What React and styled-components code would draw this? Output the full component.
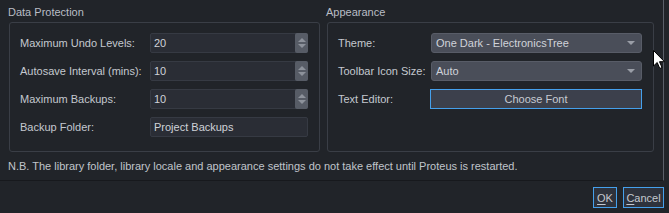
import React from "react";
import styled, { createGlobalStyle } from "styled-components";

const GlobalStyle = createGlobalStyle`
  html, body {
    margin: 0;
    padding: 0;
    background: #212429;
  }
  body {
    font-family: "Liberation Sans", Arial, sans-serif;
    font-size: 11px;
    color: #c4c8cf;
  }
`;

const Dialog = styled.div`
  position: relative;
  width: 669px;
  height: 213px;
  display: flex;
  flex-direction: column;
  overflow: hidden;
`;

const Body = styled.div`
  width: 664px;
  height: 181px;
  box-sizing: border-box;
  border-right: 1px solid #5a5f69;
  border-bottom: 1px solid #17191d;
  padding: 5px 0 0 8px;
  display: flex;
  flex-direction: column;
`;

const Columns = styled.div`
  display: flex;
  gap: 6px;
`;

const Group = styled.section`
  display: flex;
  flex-direction: column;
  width: ${(p) => p.$w}px;
`;

const GroupTitle = styled.div`
  height: 17px;
  line-height: 14px;
  color: #b9bdc5;
`;

const GroupBox = styled.div`
  margin-left: 1px;
  height: 130px;
  box-sizing: border-box;
  border: 1px solid #3a3e46;
  border-radius: 3px;
  padding: 10px 11px 0 10px;
  display: flex;
  flex-direction: column;
  gap: 8px;
`;

const Row = styled.div`
  display: grid;
  grid-template-columns: ${(p) => p.$label}px 1fr;
  align-items: center;
  height: 20px;
`;

const Label = styled.span`
  color: #c4c8cf;
  white-space: nowrap;
`;

const Field = styled.div`
  position: relative;
  height: 20px;
  box-sizing: border-box;
  border: 1px solid #363a43;
  border-radius: 2px;
  background: #2a2d35;
  display: flex;
  align-items: center;
  padding-left: 3px;
  color: #cfd2d8;
`;

const Spinner = styled.div`
  position: absolute;
  right: -1px;
  top: -1px;
  bottom: -1px;
  width: 13px;
  border-radius: 2px;
  background: #575c66;
  display: flex;
  flex-direction: column;
  align-items: center;
  justify-content: center;
  gap: 2px;
`;

const Arrow = styled.span`
  width: 0;
  height: 0;
  border-left: 4px solid transparent;
  border-right: 4px solid transparent;
  ${(p) =>
    p.$up
      ? `border-bottom: 4px solid ${p.$c || "#8d929b"};`
      : `border-top: 4px solid ${p.$c || "#8d929b"};`}
`;

const Combo = styled.div`
  height: 20px;
  box-sizing: border-box;
  border: 1px solid #585c67;
  border-radius: 3px;
  background: #4a4e59;
  display: flex;
  align-items: center;
  justify-content: space-between;
  padding: 0 6px 0 4px;
  color: #d0d3d9;
`;

const FontButton = styled.button`
  height: 20px;
  box-sizing: border-box;
  border: 1px solid #45a0ec;
  border-radius: 0;
  background: #3c404c;
  color: #c7cbd3;
  font: inherit;
  padding: 0;
`;

const Note = styled.div`
  margin-top: 7px;
  line-height: 14px;
  color: #c0c4cb;
`;

const Footer = styled.div`
  flex: 1;
  display: flex;
  justify-content: flex-end;
  align-items: flex-start;
  gap: 6px;
  padding: 6px 5px 0 0;
`;

const DlgButton = styled.button`
  width: ${(p) => p.$w}px;
  height: 21px;
  box-sizing: border-box;
  border: 1px solid #45a0ec;
  background: #2e323c;
  color: #c4c8cf;
  font: inherit;
  padding: 0;
  u {
    text-decoration-thickness: 1px;
    text-underline-offset: 2px;
  }
`;

const Cursor = styled.svg`
  position: absolute;
  left: 653px;
  top: 50px;
`;

const Spin = ({ value }) => (
  <Field>
    {value}
    <Spinner>
      <Arrow $up />
      <Arrow />
    </Spinner>
  </Field>
);

export default function App() {
  return (
    <Dialog>
      <GlobalStyle />
      <Body>
        <Columns>
          <Group $w={312}>
            <GroupTitle>Data Protection</GroupTitle>
            <GroupBox>
              <Row $label={130}>
                <Label>Maximum Undo Levels:</Label>
                <Spin value="20" />
              </Row>
              <Row $label={130}>
                <Label>Autosave Interval (mins):</Label>
                <Spin value="10" />
              </Row>
              <Row $label={130}>
                <Label>Maximum Backups:</Label>
                <Spin value="10" />
              </Row>
              <Row $label={130}>
                <Label>Backup Folder:</Label>
                <Field>Project Backups</Field>
              </Row>
            </GroupBox>
          </Group>
          <Group $w={328}>
            <GroupTitle>Appearance</GroupTitle>
            <GroupBox>
              <Row $label={93}>
                <Label>Theme:</Label>
                <Combo>
                  One Dark - ElectronicsTree
                  <Arrow $c="#9a9ea7" />
                </Combo>
              </Row>
              <Row $label={93}>
                <Label>Toolbar Icon Size:</Label>
                <Combo>
                  Auto
                  <Arrow $c="#9a9ea7" />
                </Combo>
              </Row>
              <Row $label={92}>
                <Label>Text Editor:</Label>
                <FontButton>Choose Font</FontButton>
              </Row>
            </GroupBox>
          </Group>
        </Columns>
        <Note>
          N.B. The library folder, library locale and appearance settings do
          not take effect until Proteus is restarted.
        </Note>
      </Body>
      <Footer>
        <DlgButton $w={24}>
          <u>O</u>K
        </DlgButton>
        <DlgButton $w={41}>
          <u>C</u>ancel
        </DlgButton>
      </Footer>
      <Cursor width="13" height="20" viewBox="0 0 13 20">
        <path
          d="M0.5 0.5 L0.5 16 L4.2 12.5 L6.8 18.5 L9 17.5 L6.5 11.7 L11.5 11.7 Z"
          fill="#fff"
          stroke="#000"
          strokeWidth="1"
        />
      </Cursor>
    </Dialog>
  );
}
